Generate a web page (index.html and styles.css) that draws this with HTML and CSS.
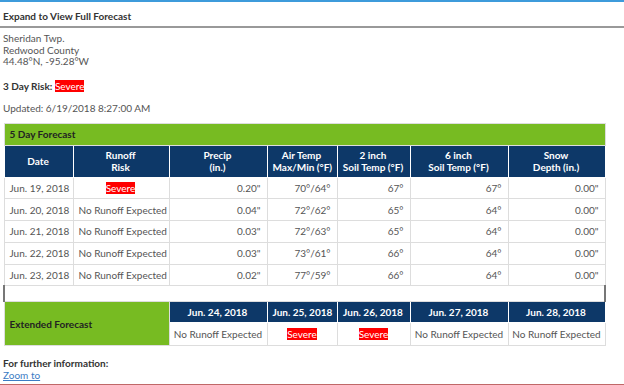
FILE: index.html
```html
<!DOCTYPE html>
<html lang="en">
<head>
    <meta charset="UTF-8">
    <title>Runoff Forecast</title>
    <link rel="stylesheet" href="styles.css">
</head>
<body>

    <div class="top-bar"></div>

    <div class="panel-title">Expand to View Full Forecast</div>

    <div class="location">
        Sheridan Twp.<br>
        Redwood County<br>
        44.48°N, -95.28°W
    </div>

    <p class="risk"><strong>3 Day Risk:</strong> <span class="severe">Severe</span></p>

    <p class="updated">Updated: 6/19/2018 8:27:00 AM</p>

    <table class="forecast">
        <colgroup>
            <col class="c-date">
            <col class="c-risk">
            <col class="c-precip">
            <col class="c-air">
            <col class="c-soil2">
            <col class="c-soil6">
            <col class="c-snow">
        </colgroup>
        <tr>
            <th class="green" colspan="7">5 Day Forecast</th>
        </tr>
        <tr class="head">
            <th>Date</th>
            <th>Runoff<br>Risk</th>
            <th>Precip<br>(in.)</th>
            <th>Air Temp<br>Max/Min (°F)</th>
            <th>2 inch<br>Soil Temp (°F)</th>
            <th>6 inch<br>Soil Temp (°F)</th>
            <th>Snow<br>Depth (in.)</th>
        </tr>
        <tr class="row">
            <td>Jun. 19, 2018</td>
            <td class="center"><span class="severe">Severe</span></td>
            <td class="num">0.20"</td>
            <td class="num">70°/64°</td>
            <td class="num">67°</td>
            <td class="num">67°</td>
            <td class="num">0.00"</td>
        </tr>
        <tr class="row">
            <td>Jun. 20, 2018</td>
            <td>No Runoff Expected</td>
            <td class="num">0.04"</td>
            <td class="num">72°/62°</td>
            <td class="num">65°</td>
            <td class="num">64°</td>
            <td class="num">0.00"</td>
        </tr>
        <tr class="row">
            <td>Jun. 21, 2018</td>
            <td>No Runoff Expected</td>
            <td class="num">0.03"</td>
            <td class="num">72°/63°</td>
            <td class="num">65°</td>
            <td class="num">64°</td>
            <td class="num">0.00"</td>
        </tr>
        <tr class="row">
            <td>Jun. 22, 2018</td>
            <td>No Runoff Expected</td>
            <td class="num">0.03"</td>
            <td class="num">73°/61°</td>
            <td class="num">66°</td>
            <td class="num">64°</td>
            <td class="num">0.00"</td>
        </tr>
        <tr class="row">
            <td>Jun. 23, 2018</td>
            <td>No Runoff Expected</td>
            <td class="num">0.02"</td>
            <td class="num">77°/59°</td>
            <td class="num">66°</td>
            <td class="num">64°</td>
            <td class="num">0.00"</td>
        </tr>

        <!-- spacer between the two tables -->
        <tr class="spacer">
            <td colspan="7"></td>
        </tr>

        <tr class="head ext-head">
            <th class="ext-label" colspan="2" rowspan="2">Extended Forecast</th>
            <th>Jun. 24, 2018</th>
            <th>Jun. 25, 2018</th>
            <th>Jun. 26, 2018</th>
            <th>Jun. 27, 2018</th>
            <th>Jun. 28, 2018</th>
        </tr>
        <tr class="row ext-row">
            <td>No Runoff Expected</td>
            <td><span class="severe">Severe</span></td>
            <td><span class="severe">Severe</span></td>
            <td>No Runoff Expected</td>
            <td>No Runoff Expected</td>
        </tr>
    </table>

    <div class="more-info">
        <strong>For further information:</strong><br>
        <a href="#">Zoom to</a>
    </div>

    <div class="bottom-line"></div>

</body>
</html>
```

FILE: styles.css
```css
body {
    margin: 0;
    font-family: Lato, "Open Sans", sans-serif;
    font-size: 10px;
    color: #555;
    background: #fff;
    overflow: hidden;
}

.top-bar {
    height: 2px;
    background-color: #3d9bdb;
}

.panel-title {
    height: 24px;
    line-height: 28px;
    padding-left: 3px;
    color: #333;
    font-weight: bold;
    border-bottom: 2px solid #999;
}

.location {
    margin: 5px 0 0 3px;
    line-height: 11.5px;
}

.risk {
    margin: 12px 0 0 3px;
    color: #333;
}

.updated {
    margin: 10px 0 0 3px;
}

.severe {
    background-color: #ff0000;
    color: #fff;
}

/* Forecast table */
.forecast {
    margin: 9px 0 0 3px;
    width: 601px;
    border-collapse: collapse;
    border: 1px solid #ddd;
    table-layout: fixed;
}

.c-date { width: 69px; }
.c-risk { width: 96px; }
.c-precip { width: 98px; }
.c-air { width: 70px; }
.c-soil2 { width: 73px; }
.c-soil6 { width: 98px; }
.c-snow { width: 97px; }

.forecast th,
.forecast td {
    border: 1px solid #ddd;
    padding: 0 6px 0 5px;
    white-space: nowrap;
    overflow: hidden;
}

.forecast .green {
    background-color: #77bb22;
    color: #222;
    text-align: left;
    height: 21px;
    font-weight: bold;
    padding-left: 5px;
}

.head th {
    background-color: #0d3868;
    color: #fff;
    font-weight: bold;
    text-align: center;
    line-height: 12px;
    height: 31px;
    border-color: #fff;
}

.row td {
    height: 20.8px;
}

.forecast .num {
    text-align: right;
}

.forecast .center {
    text-align: center;
}

.forecast .spacer td {
    height: 15px;
    border-left: 2px solid #777;
    border-right: 2px solid #777;
}

.ext-head th {
    height: 20px;
}

.forecast .ext-label {
    background-color: #77bb22;
    color: #222;
    text-align: left;
    padding-left: 5px;
    border-color: #ddd;
}

.ext-row td {
    text-align: center;
    height: 22px;
    padding: 0 2px;
}

.more-info {
    margin: 11px 0 0 3px;
    color: #333;
    line-height: 12px;
}

.more-info a {
    color: #3b7cc4;
}

.bottom-line {
    margin-top: 3px;
    height: 1px;
    background-color: #c06868;
}
```
